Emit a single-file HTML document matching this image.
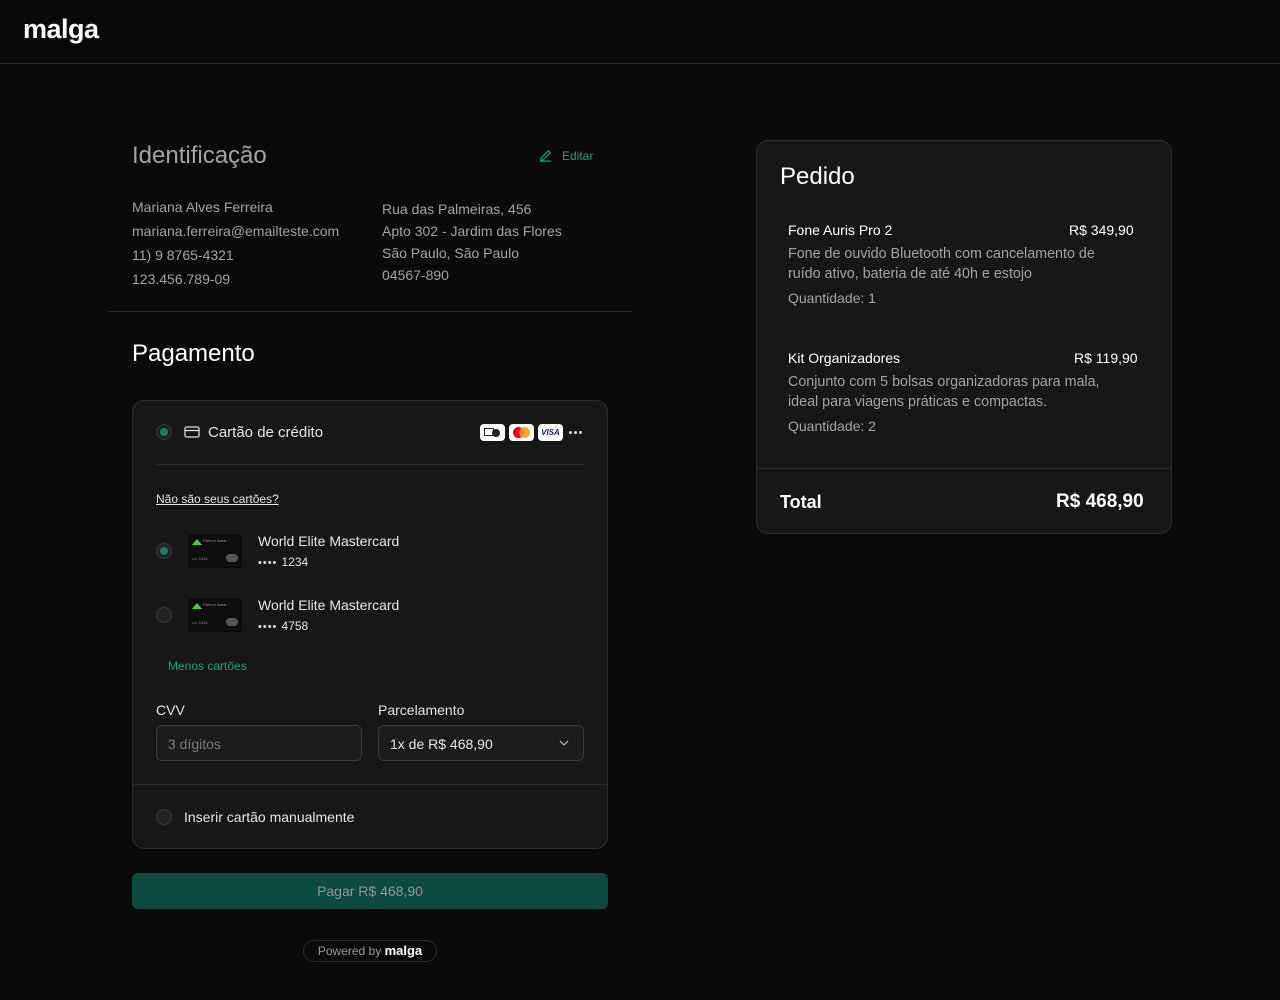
<!DOCTYPE html>
<html><head><meta charset="utf-8"><style>
*{margin:0;padding:0;box-sizing:border-box}
body{width:1280px;height:1000px;background:#0a0a0a;font-family:"Liberation Sans",sans-serif;color:#e5e5e5;position:relative;overflow:hidden}
.a{position:absolute;white-space:nowrap}
.g{color:#a3a3a3;font-size:14px}
.radio{position:absolute;width:16px;height:16px;border-radius:50%;border:1px solid #3a3a3a;background:#222}
.radio.on::after{content:"";position:absolute;left:3px;top:3px;width:8px;height:8px;border-radius:50%;background:#14806a}
.card{position:absolute;width:54px;height:34px;background:#0e0e0e;border-radius:3px}
.card i{position:absolute;left:4px;top:5px;width:0;height:0;border-left:5px solid transparent;border-right:5px solid transparent;border-bottom:6px solid #5bc84a}
.card b{position:absolute;left:15px;top:4px;font-size:4px;color:#888;font-weight:normal}
.card s{position:absolute;left:4px;top:22px;font-size:4px;color:#888;text-decoration:none}
.card u{position:absolute;left:38px;top:20px;width:12px;height:8px;border-radius:4px;background:#555}
</style></head><body>
<div class="a" style="left:23px;top:14px;font-size:27px;font-weight:bold;color:#fff;letter-spacing:-0.5px">malga</div>
<div class="a" style="left:0;top:63px;width:1280px;height:1px;background:#2a2a2a"></div>

<div class="a" style="left:132px;top:142px;font-size:24px;color:#a3a3a3">Identificação</div>
<svg class="a" style="left:538px;top:148px" width="15" height="15" viewBox="0 0 16 16" fill="none" stroke="#14a083" stroke-width="1.3"><path d="M2 14h12M3 11l8-8 2 2-8 8H3z"/></svg>
<div class="a" style="left:562px;top:149px;font-size:12px;color:#14a083">Editar</div>
<div class="a g" style="left:132px;top:195px;line-height:24px">Mariana Alves Ferreira<br>mariana.ferreira@emailteste.com<br>11) 9 8765-4321<br>123.456.789-09</div>
<div class="a g" style="left:382px;top:198px;line-height:22px">Rua das Palmeiras, 456<br>Apto 302 - Jardim das Flores<br>São Paulo, São Paulo<br>04567-890</div>
<div class="a" style="left:108px;top:311px;width:524px;height:1px;background:#2a2a2a"></div>

<div class="a" style="left:132px;top:340px;font-size:24px;color:#fff">Pagamento</div>
<div class="a" style="left:132px;top:400px;width:476px;height:449px;background:#171717;border:1px solid #2c2c2c;border-radius:12px"></div>
<div class="radio on" style="left:156px;top:424px"></div>
<svg class="a" style="left:184px;top:426px" width="16" height="12" viewBox="0 0 16 12" fill="none" stroke="#ddd" stroke-width="1.3"><rect x="1" y="1" width="14" height="10" rx="1.5"/><path d="M1 4.5h14"/></svg>
<div class="a" style="left:208px;top:424px;font-size:15px">Cartão de crédito</div>
<div class="a" style="left:480px;top:424px;width:25px;height:17px;background:#fff;border-radius:4px"><div style="position:absolute;left:4px;top:4px;width:10px;height:8px;border:1.5px solid #222"></div><div style="position:absolute;left:12px;top:5px;width:8px;height:8px;border-radius:50%;background:#222"></div></div>
<div class="a" style="left:509px;top:424px;width:25px;height:17px;background:#fff;border-radius:4px"><div style="position:absolute;left:4px;top:3px;width:11px;height:11px;border-radius:50%;background:#eb001b"></div><div style="position:absolute;left:10px;top:3px;width:11px;height:11px;border-radius:50%;background:#f79e1b;opacity:.9"></div></div>
<div class="a" style="left:538px;top:424px;width:25px;height:17px;background:#fff;border-radius:4px;font-size:8px;font-weight:bold;color:#1a1f71;text-align:center;line-height:17px;font-style:italic">VISA</div>
<div class="a" style="left:569px;top:431px;width:3px;height:3px;border-radius:50%;background:#ddd;box-shadow:5px 0 #ddd,10px 0 #ddd"></div>
<div class="a" style="left:156px;top:464px;width:428px;height:1px;background:#2c2c2c"></div>
<div class="a" style="left:156px;top:492px;font-size:12px;text-decoration:underline;color:#e5e5e5">Não são seus cartões?</div>

<div class="radio on" style="left:156px;top:543px"></div>
<div class="card" style="left:188px;top:534px"><i></i><b>Partner Bank</b><s>•••• 1234</s><u></u></div>
<div class="a" style="left:258px;top:533px;font-size:14px">World Elite Mastercard</div>
<div class="a" style="left:258px;top:555px;font-size:11px;letter-spacing:1px">•••• <span style="letter-spacing:0;font-size:12px">1234</span></div>
<div class="radio" style="left:156px;top:607px"></div>
<div class="card" style="left:188px;top:598px"><i></i><b>Partner Bank</b><s>•••• 1234</s><u></u></div>
<div class="a" style="left:258px;top:597px;font-size:14px">World Elite Mastercard</div>
<div class="a" style="left:258px;top:619px;font-size:11px;letter-spacing:1px">•••• <span style="letter-spacing:0;font-size:12px">4758</span></div>
<div class="a" style="left:168px;top:659px;font-size:12px;color:#14a083">Menos cartões</div>

<div class="a" style="left:156px;top:702px;font-size:14px">CVV</div>
<div class="a" style="left:156px;top:725px;width:206px;height:36px;border:1px solid #3a3a3a;border-radius:6px;background:#1c1c1c;padding:10px 11px;font-size:14px;color:#777">3 dígitos</div>
<div class="a" style="left:378px;top:702px;font-size:14px">Parcelamento</div>
<div class="a" style="left:378px;top:725px;width:206px;height:36px;border:1px solid #3a3a3a;border-radius:6px;background:#1c1c1c;padding:10px 11px;font-size:14px;color:#e5e5e5">1x de R$ 468,90</div>
<svg class="a" style="left:558px;top:739px" width="12" height="8" viewBox="0 0 12 8" fill="none" stroke="#aaa" stroke-width="1.3"><path d="M2 2l4 4 4-4"/></svg>
<div class="a" style="left:133px;top:784px;width:474px;height:1px;background:#2c2c2c"></div>
<div class="radio" style="left:156px;top:809px"></div>
<div class="a" style="left:184px;top:809px;font-size:14px">Inserir cartão manualmente</div>

<div class="a" style="left:132px;top:873px;width:476px;height:36px;background:#0f4a40;border-radius:6px;text-align:center;line-height:36px;font-size:14px;color:#8a9a96">Pagar R$ 468,90</div>
<div class="a" style="left:303px;top:940px;width:134px;height:22px;border:1px solid #2a2a2a;border-radius:11px;text-align:center;line-height:20px;font-size:12px;color:#999">Powered by <b style="color:#fff;font-size:13px">malga</b></div>

<div class="a" style="left:756px;top:140px;width:416px;height:394px;background:#171717;border:1px solid #2c2c2c;border-radius:12px"></div>
<div class="a" style="left:780px;top:163px;font-size:24px;color:#fff">Pedido</div>
<div class="a" style="left:788px;top:222px;font-size:14px;color:#fff">Fone Auris Pro 2</div>
<div class="a" style="left:1069px;top:222px;font-size:14px;color:#fff">R$ 349,90</div>
<div class="a g" style="left:788px;top:244px;line-height:20px;font-size:14.3px">Fone de ouvido Bluetooth com cancelamento de<br>ruído ativo, bateria de até 40h e estojo</div>
<div class="a g" style="left:788px;top:290px">Quantidade: 1</div>
<div class="a" style="left:788px;top:350px;font-size:14px;color:#fff">Kit Organizadores</div>
<div class="a" style="left:1074px;top:350px;font-size:14px;color:#fff">R$ 119,90</div>
<div class="a g" style="left:788px;top:372px;line-height:20px;font-size:14.3px">Conjunto com 5 bolsas organizadoras para mala,<br>ideal para viagens práticas e compactas.</div>
<div class="a g" style="left:788px;top:418px">Quantidade: 2</div>
<div class="a" style="left:757px;top:468px;width:414px;height:1px;background:#2c2c2c"></div>
<div class="a" style="left:780px;top:492px;font-size:18px;color:#fff;font-weight:bold">Total</div>
<div class="a" style="left:1056px;top:491px;font-size:19px;color:#fff;font-weight:bold">R$ 468,90</div>
</body></html>
